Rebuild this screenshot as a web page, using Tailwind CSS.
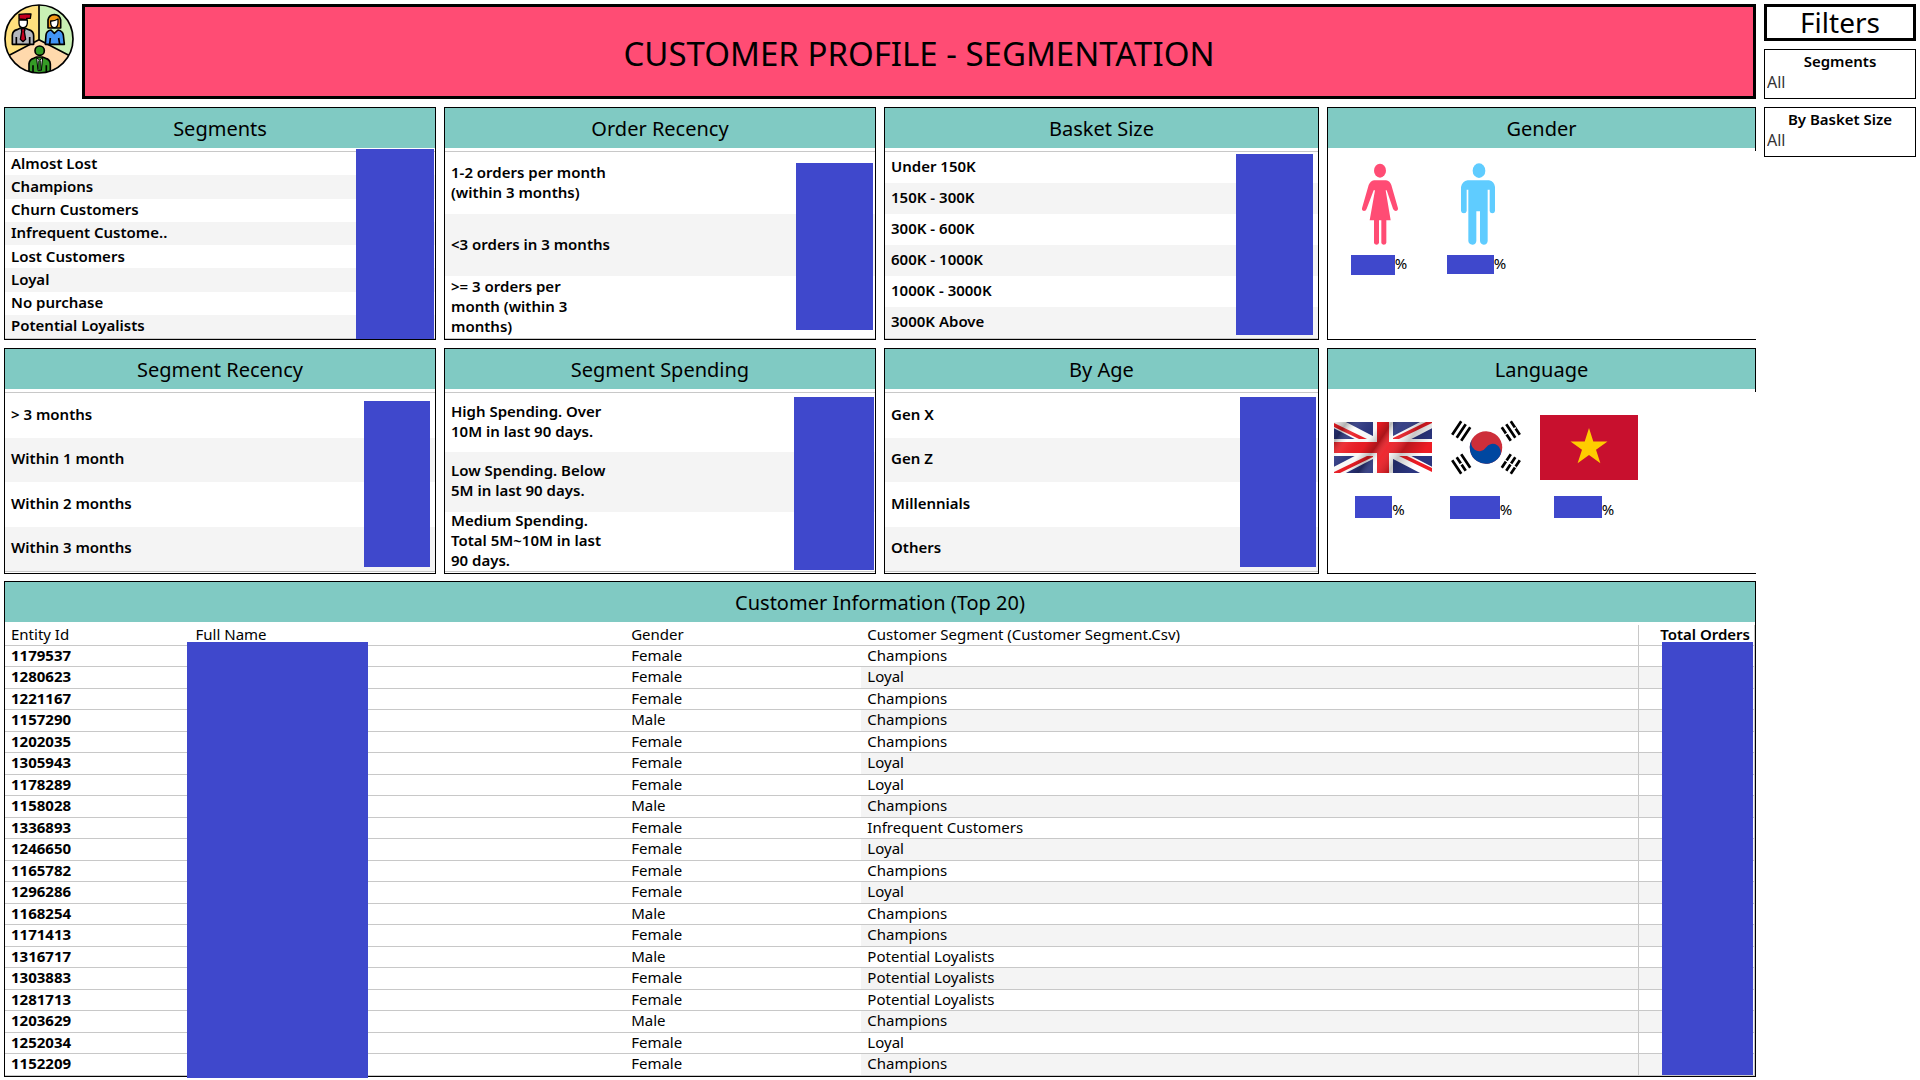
<!DOCTYPE html>
<html lang="en">
<head>
<meta charset="utf-8">
<title>Customer Profile - Segmentation</title>
<script src="https://cdn.jsdelivr.net/npm/@tailwindcss/browser@4"></script>
</head>
<body class="bg-white text-black font-['Noto_Sans',sans-serif] text-[15px] leading-5">
<div class="flex gap-2 p-1">
  <main class="flex min-w-0 flex-1 flex-col gap-2">
    <header class="flex gap-2">
      <svg class="size-[70px] shrink-0" viewBox="0 0 210 210" role="img" aria-label="Customer segments">
        <defs><clipPath id="disc"><circle cx="105" cy="105" r="102"/></clipPath></defs>
        <g clip-path="url(#disc)">
          <path fill="#ffe07d" d="M0 0h105v107L0 165z"/>
          <path fill="#c8f0b4" d="M105 0h105v165L105 107z"/>
          <path fill="#ffd9ac" d="M105 107 210 165v45H0v-45z"/>
          <path d="M105 0v107L10 157M105 107l95 50" fill="none" stroke="#000" stroke-width="5"/>
          <g stroke="#000" stroke-width="5" stroke-linejoin="round">
            <path fill="#b4b6bd" d="M25 121V94q1-14 14-17l9-4h16l10 4q15 4 15 18v26z"/>
            <path fill="#fff" stroke-width="4" d="M45 48v10q1 13 12 13t13-13V48z"/>
            <path fill="#c3001e" stroke-width="4" d="m52 77 5-5 6 5-2 6 4 23-8 7-8-7 4-23zM45 45V31q8-2 36-1l-2 13H68v4z"/>
            <path fill="none" d="M37 121V99M77 121V99"/>
            <path fill="#f39a16" d="M132 72V48q3-16 19-16t19 16v24z"/>
            <path fill="#fff" stroke-width="4" d="M140 51q11 1 22-6v12q-1 14-11 14t-11-14z"/>
            <path fill="#4295f5" d="M124 121l2-28q1-12 15-15l10 10 11-10q14 3 16 15l3 28z"/>
            <path fill="none" d="M137 121l2-19M167 121l-3-19"/>
            <circle cx="107" cy="140" r="14" fill="#359b26"/>
            <path fill="#359b26" d="M75 212v-33q2-14 14-16l9-4h17l10 4q13 3 14 17v32z"/>
            <path fill="#fff" stroke-width="3" d="m98 162 9 6 9-6-4 38h-10z"/>
            <path fill="#1c7517" stroke-width="2" d="M104 170h6l2 24-5 6-5-6z"/>
            <path fill="none" d="M87 205v-21M127 205v-21"/>
          </g>
        </g>
        <circle cx="105" cy="105" r="102" fill="none" stroke="#000" stroke-width="5"/>
      </svg>
      <h1 class="flex min-h-[95px] flex-1 items-center justify-center border-3 border-black bg-[#ff4c74] pt-1 text-[33px] leading-10">CUSTOMER PROFILE - SEGMENTATION</h1>
    </header>

    <div class="grid grid-cols-[432fr_432fr_435fr_429fr] gap-2">
      <section class="relative flex min-h-[233px] flex-col border border-black">
        <h2 class="bg-[#80cac3] pt-[7px] pb-[5px] text-center text-xl leading-7">Segments</h2>
        <ul class="mt-[3px] grid flex-1 auto-rows-fr items-center border-y border-[#c8c8c8] font-semibold [&>li]:flex [&>li]:h-full [&>li]:items-center [&>li]:px-1.5 [&>li]:pb-0.5 [&>li:nth-child(even)]:bg-[#f4f4f4]">
          <li>Almost Lost</li><li>Champions</li><li>Churn Customers</li><li>Infrequent Custome..</li><li>Lost Customers</li><li>Loyal</li><li>No purchase</li><li>Potential Loyalists</li>
        </ul>
        <div class="absolute top-[41px] right-px bottom-0 w-[78px] bg-[#3f48cc]"></div>
      </section>

      <section class="relative flex min-h-[233px] flex-col border border-black">
        <h2 class="bg-[#80cac3] pt-[7px] pb-[5px] text-center text-xl leading-7">Order Recency</h2>
        <ul class="mt-[3px] grid h-[188px] auto-rows-[minmax(0,1fr)] items-center border-y border-[#c8c8c8] font-semibold [&>li]:flex [&>li]:h-full [&>li]:items-center [&>li]:px-1.5 [&>li]:pb-[3px] [&>li:nth-child(even)]:bg-[#f4f4f4]">
          <li>1-2 orders per month<br>(within 3 months)</li><li>&lt;3 orders in 3 months</li><li>&gt;= 3 orders per<br>month (within 3<br>months)</li>
        </ul>
        <div class="absolute top-[55px] right-0.5 bottom-[9px] w-[77px] bg-[#3f48cc]"></div>
      </section>

      <section class="relative flex min-h-[233px] flex-col border border-black">
        <h2 class="bg-[#80cac3] pt-[7px] pb-[5px] text-center text-xl leading-7">Basket Size</h2>
        <ul class="mt-[3px] grid flex-1 auto-rows-fr items-center border-y border-[#c8c8c8] font-semibold [&>li]:flex [&>li]:h-full [&>li]:items-center [&>li]:px-1.5 [&>li]:pb-[3px] [&>li:nth-child(even)]:bg-[#f4f4f4]">
          <li>Under 150K</li><li>150K - 300K</li><li>300K - 600K</li><li>600K - 1000K</li><li>1000K - 3000K</li><li>3000K Above</li>
        </ul>
        <div class="absolute top-[46px] right-[5px] bottom-1 w-[77px] bg-[#3f48cc]"></div>
      </section>

      <section class="flex min-h-[233px] flex-col border-y border-l border-black">
        <div class="border-r border-black pb-[3px]"><h2 class="bg-[#80cac3] pt-[7px] pb-[5px] text-center text-xl leading-7">Gender</h2></div>
        <div class="flex pt-3 pl-[3px]">
          <figure class="flex w-[98px] flex-col items-center gap-2.5">
            <svg class="h-[82px] w-9" viewBox="0 0 108 246" fill="#ff4c74" role="img" aria-label="Female">
              <ellipse cx="54" cy="23" rx="18" ry="21"/>
              <path d="M36 52h36q12 2 16 14l20 70q0 8-7 8-6-1-8-7L74 82h-3l15 90H73v67q-1 6-8 6-7-1-7-6v-67h-7v67q-1 6-8 6-7-1-7-6v-67H23l16-90h-4l-21 55q-2 7-8 7-7-1-6-8l20-70q5-12 16-14z"/>
            </svg>
            <figcaption class="flex h-5 items-center pr-0.5"><span class="h-5 w-11 bg-[#3f48cc]"></span><span class="pb-1">%</span></figcaption>
          </figure>
          <figure class="flex w-[98px] flex-col items-center gap-2.5">
            <svg class="h-[82px] w-[34px]" viewBox="0 0 102 246" fill="#5fccff" role="img" aria-label="Male">
              <ellipse cx="54" cy="23" rx="19" ry="22"/>
              <path d="M20 52h64q16 3 18 20v72q-1 7-8 7t-8-7V80h-6v154q-1 11-12 11-10-1-11-11v-89H46v89q-1 11-12 11-11-1-12-11V80h-5v64q-1 7-8 7-8 0-9-7V72q3-17 20-20z"/>
            </svg>
            <figcaption class="flex h-5 items-start pr-[3px]"><span class="h-[19px] w-[47px] bg-[#3f48cc]"></span><span class="-mt-0.5">%</span></figcaption>
          </figure>
        </div>
      </section>
    </div>

    <div class="grid grid-cols-[432fr_432fr_435fr_429fr] gap-2">
      <section class="relative flex min-h-[226px] flex-col border border-black">
        <h2 class="bg-[#80cac3] pt-[7px] pb-[5px] text-center text-xl leading-7">Segment Recency</h2>
        <ul class="mt-[3px] mb-px grid flex-1 auto-rows-fr items-center border-y border-[#c8c8c8] font-semibold [&>li]:flex [&>li]:h-full [&>li]:items-center [&>li]:px-1.5 [&>li]:pb-[3px] [&>li:nth-child(even)]:bg-[#f4f4f4]">
          <li>&gt; 3 months</li><li>Within 1 month</li><li>Within 2 months</li><li>Within 3 months</li>
        </ul>
        <div class="absolute top-[52px] right-[5px] bottom-1.5 w-[66px] bg-[#3f48cc]"></div>
      </section>

      <section class="relative flex min-h-[226px] flex-col border border-black">
        <h2 class="bg-[#80cac3] pt-[7px] pb-[5px] text-center text-xl leading-7">Segment Spending</h2>
        <ul class="mt-[3px] mb-px grid h-[180px] auto-rows-[minmax(0,1fr)] items-center border-y border-[#c8c8c8] font-semibold [&>li]:flex [&>li]:h-full [&>li]:items-center [&>li]:px-1.5 [&>li]:pb-[3px] [&>li:nth-child(even)]:bg-[#f4f4f4]">
          <li>High Spending. Over<br>10M in last 90 days.</li><li>Low Spending. Below<br>5M in last 90 days.</li><li>Medium Spending.<br>Total 5M~10M in last<br>90 days.</li>
        </ul>
        <div class="absolute top-12 right-px bottom-[3px] w-20 bg-[#3f48cc]"></div>
      </section>

      <section class="relative flex min-h-[226px] flex-col border border-black">
        <h2 class="bg-[#80cac3] pt-[7px] pb-[5px] text-center text-xl leading-7">By Age</h2>
        <ul class="mt-[3px] mb-px grid flex-1 auto-rows-fr items-center border-y border-[#c8c8c8] font-semibold [&>li]:flex [&>li]:h-full [&>li]:items-center [&>li]:px-1.5 [&>li]:pb-[3px] [&>li:nth-child(even)]:bg-[#f4f4f4]">
          <li>Gen X</li><li>Gen Z</li><li>Millennials</li><li>Others</li>
        </ul>
        <div class="absolute top-12 right-0.5 bottom-1.5 w-[76px] bg-[#3f48cc]"></div>
      </section>

      <section class="flex min-h-[226px] flex-col border-y border-l border-black">
        <div class="border-r border-black pb-[3px]"><h2 class="bg-[#80cac3] pt-[7px] pb-[5px] text-center text-xl leading-7">Language</h2></div>
        <div class="flex gap-[5px] pt-[23px] pl-1.5">
          <figure class="flex w-[98px] flex-col items-center gap-4">
            <div class="flex h-[65px] items-center">
              <svg class="h-[51px] w-[98px]" viewBox="0 0 98 51" role="img" aria-label="English">
                <defs>
                  <linearGradient id="wave" x1="0" y1="0" x2="1" y2=".35">
                    <stop offset="0" stop-color="#000" stop-opacity=".05"/><stop offset=".12" stop-color="#000" stop-opacity=".3"/>
                    <stop offset=".24" stop-color="#fff" stop-opacity=".08"/><stop offset=".42" stop-color="#000" stop-opacity=".03"/>
                    <stop offset=".53" stop-color="#000" stop-opacity=".28"/><stop offset=".64" stop-color="#fff" stop-opacity=".06"/>
                    <stop offset=".8" stop-color="#000" stop-opacity=".22"/><stop offset="1" stop-color="#000" stop-opacity="0"/>
                  </linearGradient>
                  <clipPath id="uk"><path d="M0 0h98v51H0z"/></clipPath>
                </defs>
                <g clip-path="url(#uk)">
                  <path fill="#2b357f" d="M0 0h98v51H0z"/>
                  <path stroke="#fff" stroke-width="11" d="m0 0 98 51M98 0 0 51"/>
                  <path fill="#ed1c24" d="M0 1v4l25 12h8zM92 0h6v1L65 17h-8zM0 50v1h6l35-17h-8zM98 46v4L65 34h8z"/>
                  <path fill="#fff" d="M39 0h20v17h39v17H59v17H39V34H0V17h39z"/>
                  <path fill="#ed1c24" d="M43 0h12v20h43v11H55v20H43V31H0V20h43z"/>
                  <path fill="url(#wave)" d="M0 0h98v51H0z"/>
                </g>
              </svg>
            </div>
            <figcaption class="flex h-[22px] items-center pr-1.5"><span class="h-[22px] w-[37px] bg-[#3f48cc]"></span><span class="pt-1">%</span></figcaption>
          </figure>
          <figure class="flex w-[98px] flex-col items-center gap-4">
            <div class="flex h-[65px] items-center">
              <svg class="h-[65px] w-[98px]" viewBox="-36 -24 72 48" role="img" aria-label="Korean">
                <g transform="rotate(-56.3)">
                  <path stroke="#000" stroke-width="2" d="M-6-26H6M-6-22H6M-6-18H6M-6 18H6M-6 22H6M-6 26H6"/>
                  <path stroke="#fff" d="M0 17v10"/>
                  <circle r="12" fill="#cd2e3a"/>
                  <path fill="#0047a0" d="M0-12A6 6 0 0 0 0 0a6 6 0 0 1 0 12 12 12 0 0 1 0-24z"/>
                </g>
                <g transform="rotate(-123.7)">
                  <path stroke="#000" stroke-width="2" d="M-6-26H6M-6-22H6M-6-18H6M-6 18H6M-6 22H6M-6 26H6"/>
                  <path stroke="#fff" d="M0-23.5v3M0 17v3.5M0 23.5v3"/>
                </g>
              </svg>
            </div>
            <figcaption class="flex h-[22px] items-center pr-2.5"><span class="h-[23px] w-[50px] bg-[#3f48cc]"></span><span class="pt-1">%</span></figcaption>
          </figure>
          <figure class="flex w-[98px] flex-col items-center gap-4">
            <svg class="h-[65px] w-[98px]" viewBox="0 0 98 65" role="img" aria-label="Vietnamese">
              <path fill="#c8102e" d="M0 0h98v65H0z"/>
              <path fill="#ffcd00" d="m49 13 4.300 13.500h14.200L56 34.800l4.400 13.500L49 40l-11.400 8.300L42 34.800 30.500 26.500h14.200z"/>
            </svg>
            <figcaption class="flex h-[22px] items-center pr-2.5"><span class="h-[22px] w-12 bg-[#3f48cc]"></span><span class="pt-1">%</span></figcaption>
          </figure>
        </div>
      </section>
    </div>

    <section class="relative -mt-px border border-black">
      <h2 class="bg-[#80cac3] pt-[7px] pb-[5px] text-center text-xl leading-7">Customer Information (Top 20)</h2>
      <table class="mt-[3px] w-full table-fixed border-collapse text-left [&_td]:p-0 [&_td]:pl-1.5 [&_th]:p-0 [&_th]:pl-1.5 [&_tr]:border-b [&_tr]:border-[#c8c8c8] [&_tbody_tr]:h-[22px] [&_tbody_tr:nth-child(odd)]:h-[21px] [&_tbody_tr>*]:pb-0.5 [&_tbody_th]:font-bold [&_tbody_tr:nth-child(even)_td:nth-child(n+4)]:bg-[#f4f4f4] [&_tr>*:last-child]:border-x [&_tr>*:last-child]:border-[#c8c8c8]">
        <colgroup><col class="w-[10.55%]"><col class="w-[24.9%]"><col class="w-[13.5%]"><col class="w-[44.4%]"><col></colgroup>
        <thead class="leading-[19px] [&_th]:font-normal"><tr class="h-5"><th>Entity Id</th><th>Full Name</th><th>Gender</th><th>Customer Segment (Customer Segment.Csv)</th><th><b class="mr-1 block text-right font-semibold">Total Orders</b></th></tr></thead>
        <tbody class="leading-[18px]">
          <tr><th>1179537</th><td></td><td>Female</td><td>Champions</td><td></td></tr>
          <tr><th>1280623</th><td></td><td>Female</td><td>Loyal</td><td></td></tr>
          <tr><th>1221167</th><td></td><td>Female</td><td>Champions</td><td></td></tr>
          <tr><th>1157290</th><td></td><td>Male</td><td>Champions</td><td></td></tr>
          <tr><th>1202035</th><td></td><td>Female</td><td>Champions</td><td></td></tr>
          <tr><th>1305943</th><td></td><td>Female</td><td>Loyal</td><td></td></tr>
          <tr><th>1178289</th><td></td><td>Female</td><td>Loyal</td><td></td></tr>
          <tr><th>1158028</th><td></td><td>Male</td><td>Champions</td><td></td></tr>
          <tr><th>1336893</th><td></td><td>Female</td><td>Infrequent Customers</td><td></td></tr>
          <tr><th>1246650</th><td></td><td>Female</td><td>Loyal</td><td></td></tr>
          <tr><th>1165782</th><td></td><td>Female</td><td>Champions</td><td></td></tr>
          <tr><th>1296286</th><td></td><td>Female</td><td>Loyal</td><td></td></tr>
          <tr><th>1168254</th><td></td><td>Male</td><td>Champions</td><td></td></tr>
          <tr><th>1171413</th><td></td><td>Female</td><td>Champions</td><td></td></tr>
          <tr><th>1316717</th><td></td><td>Male</td><td>Potential Loyalists</td><td></td></tr>
          <tr><th>1303883</th><td></td><td>Female</td><td>Potential Loyalists</td><td></td></tr>
          <tr><th>1281713</th><td></td><td>Female</td><td>Potential Loyalists</td><td></td></tr>
          <tr><th>1203629</th><td></td><td>Male</td><td>Champions</td><td></td></tr>
          <tr><th>1252034</th><td></td><td>Female</td><td>Loyal</td><td></td></tr>
          <tr><th>1152209</th><td></td><td>Female</td><td>Champions</td><td></td></tr>
        </tbody>
      </table>
      <div class="absolute top-[60px] -bottom-0.5 left-[10.4%] w-[181px] bg-[#3f48cc]"></div>
      <div class="absolute top-[60px] right-0.5 bottom-px w-[91px] bg-[#3f48cc]"></div>
    </section>
  </main>

  <aside class="flex w-[152px] shrink-0 flex-col gap-2">
    <h2 class="border-3 border-black text-center text-[28px] leading-[31px]">Filters</h2>
    <div class="flex flex-col border border-black pb-1.5">
      <label for="segments" class="text-center font-semibold leading-[22px]">Segments</label>
      <select id="segments" class="h-5 appearance-none bg-transparent pl-0.5 text-base leading-5 text-[#333]"><option>All</option></select>
    </div>
    <div class="flex flex-col border border-black pb-1.5">
      <label for="basket" class="text-center font-semibold leading-[22px]">By Basket Size</label>
      <select id="basket" class="h-5 appearance-none bg-transparent pl-0.5 text-base leading-5 text-[#333]"><option>All</option></select>
    </div>
  </aside>
</div>
</body>
</html>
